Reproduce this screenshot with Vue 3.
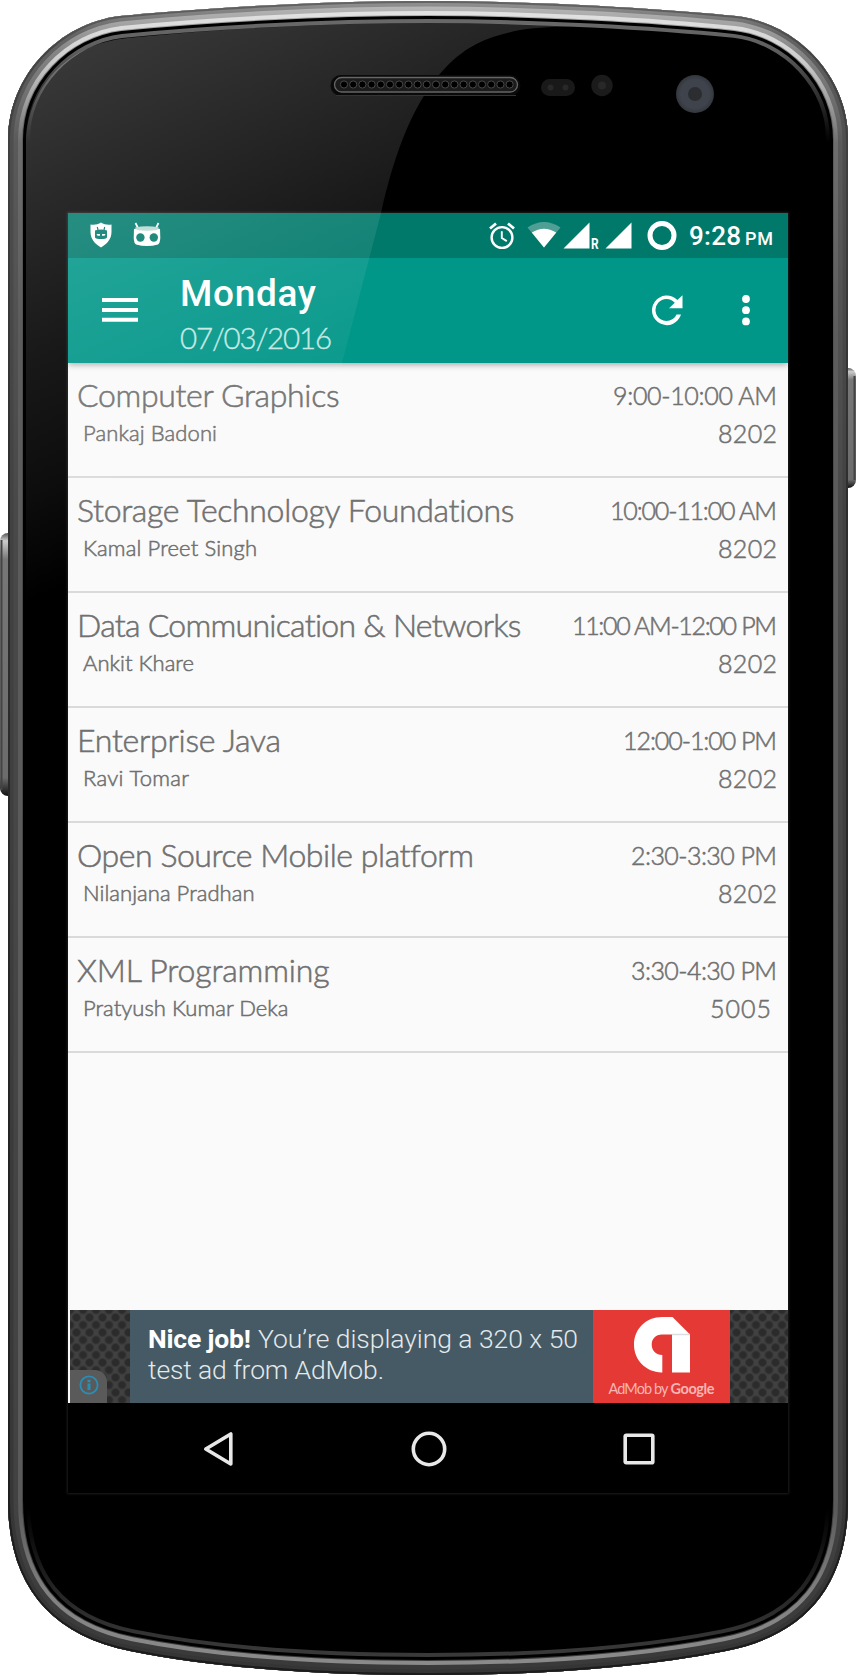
<script setup>
const classes = [
  { title: 'Computer Graphics', tw: 262.5, teacher: 'Pankaj Badoni', nw: 134, time: '9:00-10:00 AM', hw: 164, room: '8202' },
  { title: 'Storage Technology Foundations', tw: 438, teacher: 'Kamal Preet Singh', nw: 174, time: '10:00-11:00 AM', hw: 167, room: '8202' },
  { title: 'Data Communication & Networks', tw: 445, teacher: 'Ankit Khare', nw: 111, time: '11:00 AM-12:00 PM', hw: 205, room: '8202' },
  { title: 'Enterprise Java', tw: 204, teacher: 'Ravi Tomar', nw: 106, time: '12:00-1:00 PM', hw: 154, room: '8202' },
  { title: 'Open Source Mobile platform', tw: 396.5, teacher: 'Nilanjana Pradhan', nw: 171.500, time: '2:30-3:30 PM', hw: 146, room: '8202' },
  { title: 'XML Programming', tw: 252.5, teacher: 'Pratyush Kumar Deka', nw: 205.500, time: '3:30-4:30 PM', hw: 146, room: '5005', inset: true },
]

const holes = Array.from({ length: 19 }, (_, i) => 344 + i * 9.2)

// Spreads the letters of an element so that its line has the given width.
const vFit = {
  mounted(el, { value }) {
    const gaps = el.textContent.length - 1
    const spacing = (value - el.getBoundingClientRect().width) / gaps
    el.style.letterSpacing = `${spacing}px`
    el.style.marginRight = `${-spacing}px`
  },
}

const body =
  'M428 1C320 1 200 8 120 16C60 23 8 75 8 140V1500C8 1585 50 1635 130 1651C230 1671 340 1675 428 1675C516 1675 626 1671 726 1651C806 1635 848 1585 848 1500V140C848 75 796 23 736 16C656 8 536 1 428 1Z'
</script>

<template>
  <div class="phone">
    <svg class="shell" width="856" height="1676" viewBox="0 0 856 1676">
      <defs>
        <clipPath id="bodyClip"><path :d="body" /></clipPath>
        <linearGradient id="hi" gradientUnits="userSpaceOnUse" x1="0" y1="0" x2="0" y2="1676">
          <stop offset="0" stop-color="#e6e6e6" /><stop offset=".035" stop-color="#cfcfcf" /><stop offset=".06" stop-color="#a0a0a0" />
          <stop offset=".085" stop-color="#6e6e6e" /><stop offset=".2" stop-color="#5c5c5c" /><stop offset=".9" stop-color="#5a5a5a" />
          <stop offset=".95" stop-color="#808080" /><stop offset="1" stop-color="#8c8c8c" />
        </linearGradient>
        <linearGradient id="mid" gradientUnits="userSpaceOnUse" x1="0" y1="0" x2="0" y2="1676">
          <stop offset="0" stop-color="#bdbdbd" /><stop offset=".03" stop-color="#858585" /><stop offset=".085" stop-color="#5a5a5a" />
          <stop offset=".3" stop-color="#494949" /><stop offset=".9" stop-color="#424242" /><stop offset="1" stop-color="#393939" />
        </linearGradient>
        <linearGradient id="low" gradientUnits="userSpaceOnUse" x1="0" y1="0" x2="0" y2="1676">
          <stop offset="0" stop-color="#949494" /><stop offset=".02" stop-color="#646464" /><stop offset=".085" stop-color="#4e4e4e" />
          <stop offset=".3" stop-color="#424242" /><stop offset="1" stop-color="#353535" />
        </linearGradient>
        <linearGradient id="edge" gradientUnits="userSpaceOnUse" x1="0" y1="0" x2="0" y2="1676">
          <stop offset="0" stop-color="#656565" /><stop offset=".03" stop-color="#444" /><stop offset=".3" stop-color="#2e2e2e" />
          <stop offset="1" stop-color="#1c1c1c" />
        </linearGradient>
        <linearGradient id="lip" gradientUnits="userSpaceOnUse" x1="0" y1="0" x2="0" y2="1676">
          <stop offset="0" stop-color="#707070" /><stop offset=".03" stop-color="#5e5e5e" /><stop offset=".06" stop-color="#2c2c2c" />
          <stop offset=".085" stop-color="#000" /><stop offset=".9" stop-color="#000" /><stop offset=".95" stop-color="#262626" />
          <stop offset="1" stop-color="#404040" />
        </linearGradient>
        <linearGradient id="key" x1="0" y1="0" x2="0" y2="1">
          <stop offset="0" stop-color="#555" /><stop offset=".03" stop-color="#ccc" /><stop offset=".1" stop-color="#777" />
          <stop offset=".93" stop-color="#6c6c6c" /><stop offset="1" stop-color="#111" />
        </linearGradient>
      </defs>
      <rect x="0" y="533" width="20" height="263" rx="8" fill="url(#key)" />
      <rect x="0.5" y="540" width="2" height="250" fill="#444" />
      <rect x="836" y="368" width="20" height="120" rx="8" fill="url(#key)" />
      <rect x="853.5" y="376" width="2" height="104" fill="#444" />
      <g clip-path="url(#bodyClip)" fill="none">
        <path :d="body" fill="#000" />
        <path :d="body" stroke="url(#lip)" stroke-width="44" />
        <path :d="body" stroke="#000" stroke-width="36" />
        <path :d="body" stroke="url(#mid)" stroke-width="30" />
        <path :d="body" stroke="url(#hi)" stroke-width="28" />
        <path :d="body" stroke="url(#mid)" stroke-width="20" />
        <path :d="body" stroke="url(#low)" stroke-width="11" />
        <path :d="body" stroke="url(#edge)" stroke-width="4" />
      </g>
    </svg>

    <main class="screen">
      <div class="status">
        <svg class="shield" width="22" height="26" viewBox="0 0 22 26">
          <path d="M11 .5C14 2.600 18 3 21.500 2.500V10C21.500 17 17 22 11 25.500C5 22 .5 17 .5 10V2.500C4 3 8 2.600 11 .5Z" fill="#fff" />
          <path d="M7.300 5L8 8M14.700 5L14 8" stroke="#00796b" stroke-width="1.200" />
          <path d="M5 8.500Q11 6.500 17 8.500V15.500Q16 17 11 17Q6 17 5 15.500Z" fill="#00796b" />
          <path d="M6.500 12H10V13.800H7.500ZM15.500 12H12V13.800H14.500Z" fill="#fff" />
        </svg>
        <svg class="cid" width="28" height="26" viewBox="0 0 28 26">
          <path d="M2.500 1L5 6M25.500 1L23 6" stroke="#fff" stroke-width="1.700" />
          <path d="M1 7Q14 3 27 7L27.300 16Q27 21 25 22.500Q14 25.500 3 22.500Q1 21 .7 16Z" fill="#fff" />
          <path d="M2 5.500Q14 3 26 5.500L24 8Q14 9.500 4 8Z" fill="#b8dad5" />
          <circle cx="7.400" cy="15.500" r="4.200" fill="#00796b" /><circle cx="20.800" cy="15.500" r="4.200" fill="#00796b" />
        </svg>
        <svg class="alarm" width="26" height="28" viewBox="0 0 26 28" fill="none" stroke="#fff">
          <circle cx="13" cy="15.500" r="10.400" stroke-width="2.400" />
          <path d="M12.800 9.300V16L17.800 19.100" stroke-width="1.900" />
          <path d="M1 6.500L7 1.500M25 6.500L19 1.500" stroke-width="2.800" />
        </svg>
        <svg class="wifi" width="34" height="27" viewBox="0 0 34 27">
          <path d="M.5 6.500Q17-4.500 33.500 6.500L17 26.500Z" fill="#4f9f94" />
          <path d="M4.800 11.500Q17 3.800 29.200 11.500L17 26.500Z" fill="#fff" />
        </svg>
        <svg class="bars" width="27" height="27" viewBox="0 0 27 27"><path d="M26.500 .5V26.500H.5Z" fill="#fff" /></svg>
        <span class="roam">R</span>
        <svg class="bars second" width="27" height="27" viewBox="0 0 27 27"><path d="M26.500 .5V26.500H.5Z" fill="#fff" /></svg>
        <svg class="ring" width="30" height="30" viewBox="0 0 30 30"><circle cx="15" cy="14.500" r="12" fill="none" stroke="#fff" stroke-width="5" /></svg>
        <span v-fit="52" class="clock">9:28</span>
        <span v-fit="28" class="pm">PM</span>
      </div>

      <header class="bar">
        <svg class="menu" width="36" height="26" viewBox="0 0 36 26"><path d="M0 3H36M0 13H36M0 22.700H36" stroke="#fff" stroke-width="4" /></svg>
        <div class="heading">
          <div><span v-fit="136" class="day">Monday</span></div>
          <div><span v-fit="152" class="date">07/03/2016</span></div>
        </div>
        <svg class="reload" width="32" height="32" viewBox="0 0 32 32">
          <path d="M26.400 6A14.800 14.800 0 1 0 30 20.500H25.500A11 11 0 1 1 23.800 8.700L18 14.300H31.500V1.300Z" fill="#fff" />
        </svg>
        <svg class="more" width="8" height="32" viewBox="0 0 8 32" fill="#fff"><circle cx="4" cy="5" r="3.900" /><circle cx="4" cy="16.200" r="3.900" /><circle cx="4" cy="27.400" r="3.900" /></svg>
      </header>

      <section class="list">
        <article v-for="c in classes" :key="c.title" class="row">
          <div class="left">
            <div class="title"><span v-fit="c.tw">{{ c.title }}</span></div>
            <div class="teacher"><span v-fit="c.nw">{{ c.teacher }}</span></div>
          </div>
          <div class="right">
            <div class="time"><span v-fit="c.hw">{{ c.time }}</span></div>
            <div class="time" :class="{ inset: c.inset }"><span v-fit="c.inset ? 61 : 59">{{ c.room }}</span></div>
          </div>
        </article>
      </section>

      <aside class="ad">
        <div class="mesh start">
          <div class="info">
            <svg width="20" height="20" viewBox="0 0 20 20" fill="none" stroke="#2a8db5"><circle cx="10" cy="10" r="8.600" stroke-width="1.900" /><path d="M10 8.500V15M10 4.700V7.200" stroke-width="3" /></svg>
          </div>
        </div>
        <div class="copy">
          <div><b v-fit="103">Nice job!</b><span v-fit="320" class="rest">You’re displaying a 320 x 50</span></div>
          <div><span v-fit="236">test ad from AdMob.</span></div>
        </div>
        <div class="brand">
          <svg width="58" height="58" viewBox="0 0 58 58">
            <path d="M28.500 56.500C13 56 1 44 1 28.700C1 13 13 1 29 1H39.500L57 18.500V56.500H39V18.500H29C22.500 18.500 18.700 23 18.700 28.500C18.700 34.500 23 39 29.300 39V56.500Z" fill="#fff" />
            <path d="M39 18.500H57" stroke="#ddd" stroke-width="1.500" />
          </svg>
          <div class="by"><span v-fit="60">AdMob by</span><b v-fit="44">Google</b></div>
        </div>
        <div class="mesh end"></div>
      </aside>

      <nav class="nav">
        <svg width="36" height="36" viewBox="0 0 36 36"><path d="M4.800 18L29.800 3V33Z" /></svg>
        <svg width="36" height="36" viewBox="0 0 36 36"><circle cx="18" cy="18" r="15.700" /></svg>
        <svg width="36" height="36" viewBox="0 0 36 36"><rect x="4.200" y="4.200" width="27.600" height="27.600" rx="1" /></svg>
      </nav>
    </main>

    <svg class="shell" width="856" height="1676" viewBox="0 0 856 1676">
      <defs>
        <linearGradient id="gloss" gradientUnits="userSpaceOnUse" x1="100" y1="40" x2="300" y2="480">
          <stop offset="0" stop-color="#fff" stop-opacity=".22" /><stop offset=".55" stop-color="#fff" stop-opacity=".095" />
          <stop offset=".8" stop-color="#fff" stop-opacity=".05" /><stop offset="1" stop-color="#fff" stop-opacity="0" />
        </linearGradient>
        <radialGradient id="lens"><stop offset=".75" stop-color="#3f434b" /><stop offset="1" stop-color="#33363d" /></radialGradient>
      </defs>
      <path d="M575 27C500 25 468 45 448 65C415 98 395 150 381 213L342 363L240 760H26V140C28 90 65 44 128 38C230 28 330 23 428 23Q510 23 575 27Z" fill="url(#gloss)" />
      <rect x="330.500" y="75" width="190" height="21" rx="10.500" fill="#0a0a0a" />
      <path d="M336 95.500H516" stroke="#333" />
      <rect x="334.500" y="77.500" width="183" height="14.500" rx="7.200" fill="#1b1b1b" stroke="#666" stroke-width="1.300" />
      <g fill="#000" stroke="#484848"><circle v-for="x in holes" :key="x" :cx="x" cy="84.500" r="3.600" /></g>
      <rect x="541" y="79" width="34" height="17" rx="8.500" fill="#191919" />
      <circle cx="550.500" cy="87.500" r="3" fill="#282828" /><circle cx="565.500" cy="87.500" r="3" fill="#282828" />
      <circle cx="602" cy="85.500" r="10.700" fill="#1b1b1b" /><circle cx="602" cy="85.500" r="4" fill="#282828" />
      <circle cx="695" cy="94" r="19" fill="url(#lens)" /><circle cx="695" cy="94" r="7" fill="#2b2d31" />
    </svg>
  </div>
</template>

<style>
body { background: #fff; }
</style>

<style scoped>
.phone {
  position: relative;
  box-sizing: border-box;
  width: 856px;
  height: 1676px;
  padding: 213px 68px 183px;
  overflow: hidden;
  font-family: Roboto, "Liberation Sans", sans-serif;
}
.shell { position: absolute; inset: 0; pointer-events: none; }
.screen {
  position: relative;
  isolation: isolate;
  display: flex;
  flex-direction: column;
  width: 720px;
  height: 1280px;
  background: #fafafa;
  box-shadow: 0 0 2px 1px #1c1c1c;
}
svg { display: block; flex: none; }
span, b { display: inline-block; white-space: nowrap; }

.status { display: flex; height: 45px; background: #00796b; color: #fff; align-items: flex-start; }
.shield { margin: 9px 0 0 22px; }
.cid { margin: 9px 0 0 21px; }
.alarm { margin: 9px 0 0 328px; }
.wifi { margin: 8px 0 0 12px; }
.bars { margin: 9px 0 0 2px; }
.roam { width: 8px; margin: 23px 0 0 1px; font-size: 14px; font-weight: 700; line-height: 16px; transform: scaleX(.85); transform-origin: left; }
.second { margin-left: 6px; }
.ring { margin: 8px 0 0 15px; }
.clock { margin: 6px 0 0 12px; font-size: 26px; font-weight: 500; line-height: 34px; }
.pm { margin: 14px 0 0 4px; font-size: 18px; font-weight: 500; line-height: 24px; }

.bar {
  position: relative;
  z-index: 1;
  display: flex;
  height: 105px;
  background: #009688;
  color: #fff;
  box-shadow: 0 2px 6px rgba(0, 0, 0, .32);
  clip-path: inset(0 0 -12px 0);
}
.menu { margin: 38.500px 0 0 34px; }
.heading { width: 400px; margin: 13px 0 0 42px; }
.day { font-size: 37px; font-weight: 500; line-height: 46px; }
.date { font-family: Lato, sans-serif; font-size: 29.500px; font-weight: 300; line-height: 42px; color: #c4e8e3; -webkit-text-stroke: .35px #c4e8e3; }
.reload { margin: 36px 0 0 71px; }
.more { margin: 36px 0 0 59px; }

.list { flex: 1; font-family: Lato, sans-serif; font-weight: 300; color: #707070; -webkit-text-stroke: .55px #707070; }
.row {
  display: flex;
  justify-content: space-between;
  box-sizing: border-box;
  height: 115px;
  padding: 12px 11px 0 9px;
  border-bottom: 2px solid #dadada;
}
.title { height: 40px; font-size: 32px; line-height: 40px; }
.teacher { height: 28px; padding: 4px 0 0 6px; font-size: 22px; line-height: 28px; }
.right { padding-top: 5px; text-align: right; }
.time { height: 30px; margin-bottom: 8px; font-size: 25px; line-height: 30px; }
.inset { padding-right: 6px; }

.ad { display: flex; height: 93px; margin-left: 2px; }
.mesh {
  background-color: #414141;
  background-image: radial-gradient(circle, #2b2b2b 3px, transparent 5px), radial-gradient(circle, #2b2b2b 3px, transparent 5px);
  background-size: 13px 15px;
  background-position: 0 0, 6.500px 7.500px;
}
.start { display: flex; align-items: flex-end; width: 60px; }
.end { width: 58px; }
.info { display: flex; align-items: center; justify-content: center; box-sizing: border-box; width: 37px; height: 33px; padding: 0 0 3px 1px; border-radius: 0 12px 0 0; background: #5a5a5a; }
.copy { width: 463px; box-sizing: border-box; padding: 13px 0 0 18px; background: #455a64; color: #e4e9eb; font-size: 26.500px; font-weight: 300; line-height: 31px; }
.copy b { font-weight: 700; color: #fff; }
.rest { margin-left: 7px; }
.brand { display: flex; flex-direction: column; align-items: center; width: 137px; background: #e53935; color: #f6b5b3; }
.brand svg { margin: 6px 0 0 1px; }
.by { display: flex; gap: 2px; margin-top: 6px; font: 400 14.500px/18px Lato, sans-serif; }
.by b { font-weight: 700; }

.nav { display: flex; align-items: center; justify-content: space-between; height: 90px; box-sizing: border-box; padding: 1px 131px 0 133px; background: #000; }
.nav svg { fill: none; stroke: #e8e8e8; stroke-width: 3.600; stroke-linejoin: round; }
</style>
